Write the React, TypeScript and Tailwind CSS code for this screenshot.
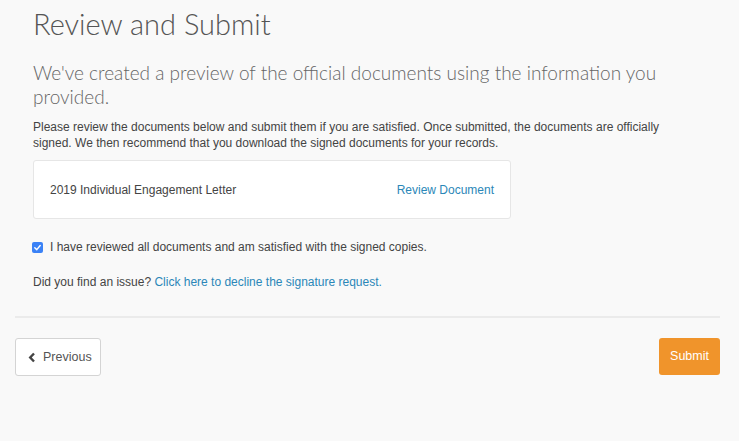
import React from "react";

export default function App() {
  return (
    <div className="min-h-[441px] w-[739px] bg-[#f9f9f9] pl-[15px] pr-[19px] pt-[6px]" style={{ fontFamily: "'Liberation Sans', Arial, sans-serif" }}>
      <div className="pl-[18px]">
        <h1 className="text-[29px] leading-[36px] font-light text-[#555]" style={{ fontFamily: "Lato, 'Open Sans', sans-serif" }}>
          Review and Submit
        </h1>
        <p className="mt-[19px] text-[19px] leading-[24px] font-light text-[#666] w-[650px]" style={{ fontFamily: "Lato, 'Open Sans', sans-serif" }}>
          We've created a preview of the official documents using the information you provided.
        </p>
        <p className="mt-[10px] text-[12px] leading-[16px] text-[#444] w-[660px]">
          Please review the documents below and submit them if you are satisfied. Once submitted, the documents are officially signed. We then recommend that you download the signed documents for your records.
        </p>
        <div className="mt-[9px] w-[478px] h-[59px] bg-white border border-[#e6e6e6] rounded-[3px] flex items-center justify-between pl-[16px] pr-[16px]">
          <span className="text-[12px] text-[#444]">2019 Individual Engagement Letter</span>
          <span className="text-[12px] text-[#2b87b8]">Review Document</span>
        </div>
        <div className="mt-[19px] flex items-center gap-[7px] -ml-[1px]">
          <span className="w-[11px] h-[11px] rounded-[2px] bg-[#3b82f6] flex items-center justify-center">
            <svg width="9" height="9" viewBox="0 0 10 10"><path d="M2 5.2 L4.2 7.4 L8 2.8" stroke="white" strokeWidth="1.6" fill="none" strokeLinecap="round" strokeLinejoin="round" /></svg>
          </span>
          <span className="text-[12px] text-[#444]">I have reviewed all documents and am satisfied with the signed copies.</span>
        </div>
        <p className="mt-[18px] text-[12px] leading-[16px] text-[#444]">
          Did you find an issue? <span className="text-[#2b87b8]">Click here to decline the signature request.</span>
        </p>
      </div>
      <div className="mt-[26px] h-[2px] bg-[#ebebeb]" />
      <div className="mt-[20px] flex justify-between">
        <button className="h-[38px] w-[86px] bg-white border border-[#d4d4d4] rounded-[3px] flex items-center pl-[12px] gap-[7px] text-[12.5px] text-[#555]">
          <svg width="8" height="11" viewBox="0 0 8 11"><path d="M6 1.5 L2.2 5.5 L6 9.5" stroke="#444" strokeWidth="2.4" fill="none" /></svg>
          Previous
        </button>
        <button className="h-[37px] w-[61px] bg-[#f0942b] rounded-[3px] text-[12.5px] text-white">Submit</button>
      </div>
    </div>
  );
}
